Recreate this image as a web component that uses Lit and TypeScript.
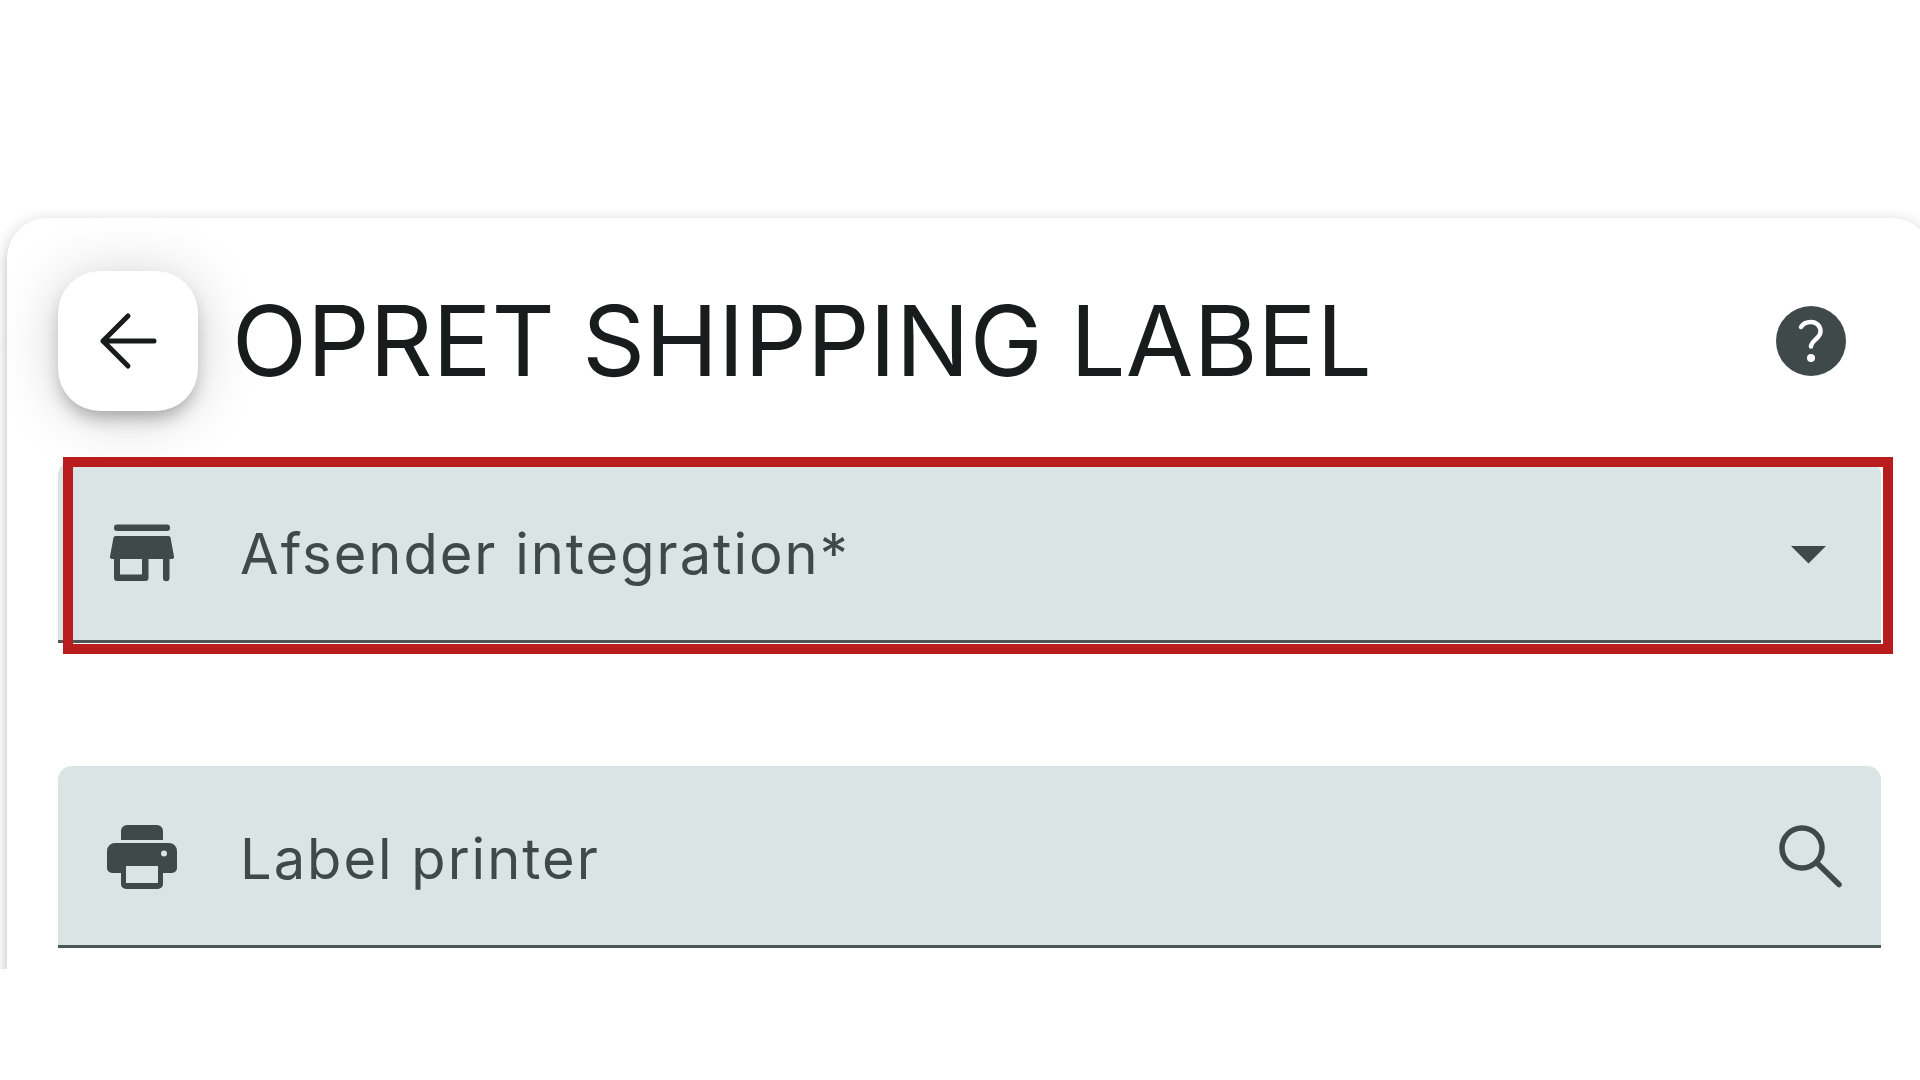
import { LitElement, html, css, svg } from "lit";
import { customElement } from "lit/decorators.js";

const arrowBack = svg`<path d="M42 17 17 42l25 25M17 42h51" fill="none" stroke="currentColor" stroke-width="5" stroke-linecap="round" stroke-linejoin="round"/>`;

const help = svg`<circle cx="42" cy="42" r="35" fill="currentColor"/>
  <path d="M32 28c2-3.500 6-5 10-5 5.500 0 9.500 4 9.500 9.500 0 7-9.500 9-9.500 15" fill="none" stroke="#fff" stroke-width="4.500" stroke-linecap="round"/>
  <circle cx="42" cy="59" r="4" fill="#fff"/>`;

const store = svg`<path fill="currentColor" fill-rule="evenodd" d="M17 14.500h50a3 3 0 0 1 3 3v.500a3 3 0 0 1-3 3H17a3 3 0 0 1-3-3v-.500a3 3 0 0 1 3-3zM15.500 26h53a2 2 0 0 1 2 1.500L74 46.500a2 2 0 0 1-2 2.500h-2.500v19a3 3 0 0 1-6.500 0V49H48.500v19a3 3 0 0 1-3 3H17a3 3 0 0 1-3-3V49h-2a2 2 0 0 1-2-2.500l3.500-19a2 2 0 0 1 2-1.500zM20 49v15.500h22V49z"/>`;

const printer = svg`<path fill="currentColor" fill-rule="evenodd" d="M21 25v-9a6 6 0 0 1 6-6h30a6 6 0 0 1 6 6v9zM15 28h54a8 8 0 0 1 8 8v17a5 5 0 0 1-5 5h-9v11a5 5 0 0 1-5 5H26a5 5 0 0 1-5-5V58h-9a5 5 0 0 1-5-5V36a8 8 0 0 1 8-8zM26 51v17h32V51zM64 35.500a3 3 0 1 0 0 6 3 3 0 0 0 0-6z"/>`;

const search = svg`<g fill="none" stroke="currentColor" stroke-width="5.500"><circle cx="33" cy="33" r="20"/><path d="M47.500 47.500 70 69.500" stroke-linecap="round"/></g>`;

const caret = svg`<path fill="currentColor" d="M22 36h35L39.500 53.500z"/>`;

const icon = (shape: unknown) =>
  html`<svg class="icon" viewBox="0 0 84 84" aria-hidden="true">${shape}</svg>`;

@customElement("app-root")
export class AppRoot extends LitElement {
  static styles = css`
    :host {
      display: block;
      padding: 209px 0 111px;
      background: #fff;
      color: #191c1c;
      font-family: Inter, "Liberation Sans", sans-serif;
    }
    .stage {
      overflow: hidden;
    }
    .card {
      margin: 9px -12px -42px 7px;
      padding: 53px 51px 63px;
      border-radius: 40px;
      background: #fff;
      box-shadow: 0 7px 10px -3px rgba(0, 0, 0, 0.2),
        0 4px 18px rgba(0, 0, 0, 0.2);
    }
    .header {
      display: flex;
      align-items: center;
      margin-bottom: 50px;
      padding-right: 28px;
    }
    button {
      display: flex;
      align-items: center;
      justify-content: center;
      flex: none;
      padding: 0;
      border: 0;
      background: none;
      color: #3f4949;
      cursor: pointer;
    }
    .back {
      width: 140px;
      height: 140px;
      border-radius: 42px;
      background: #fff;
      color: #191c1c;
      box-shadow: 0 10px 18px -4px rgba(0, 0, 0, 0.3),
        0 4px 60px rgba(0, 0, 0, 0.18);
    }
    .icon {
      display: block;
      flex: none;
      width: 84px;
      height: 84px;
    }
    h1 {
      flex: 1;
      margin: 0 0 0 34px;
      font-size: 98px;
      line-height: 126px;
      font-weight: 400;
      white-space: nowrap;
    }
    .fields {
      display: grid;
      gap: 123px;
    }
    .field {
      position: relative;
      display: grid;
      grid-template-columns: 84px 1fr 84px;
      column-gap: 56px;
      align-items: center;
      box-sizing: border-box;
      height: 182px;
      padding: 3px 28px 0 42px;
      border-bottom: 3px solid #4c5656;
      border-radius: 14px 14px 0 0;
      background: #dae4e4;
      color: #3f4949;
    }
    .highlight {
      position: absolute;
      inset: -4px -12px -14px 5px;
      border: 10px solid #b81c1c;
      pointer-events: none;
    }
    .label,
    .control {
      grid-area: 1 / 2;
      font-size: 56px;
      line-height: 84px;
      letter-spacing: 2px;
    }
    .label {
      padding-top: 3px;
      pointer-events: none;
      z-index: 1;
    }
    .control {
      appearance: none;
      width: 100%;
      height: 84px;
      padding: 0;
      border: 0;
      outline: 0;
      background: none;
      color: inherit;
      font-family: inherit;
    }
  `;

  render() {
    return html`
      <main class="stage">
        <form class="card">
          <header class="header">
            <button class="back" type="button" aria-label="Tilbage">${icon(arrowBack)}</button>
            <h1>OPRET SHIPPING LABEL</h1>
            <button type="button" aria-label="Hjælp">${icon(help)}</button>
          </header>
          <div class="fields">
            <div class="field">
              ${icon(store)}
              <label class="label" for="integration">Afsender integration*</label>
              <select class="control" id="integration" required>
                <option value=""></option>
              </select>
              ${icon(caret)}
              <div class="highlight"></div>
            </div>
            <div class="field">
              ${icon(printer)}
              <label class="label" for="printer">Label printer</label>
              <input class="control" id="printer" type="text" />
              <button type="button" aria-label="Søg">${icon(search)}</button>
            </div>
          </div>
        </form>
      </main>
    `;
  }
}
